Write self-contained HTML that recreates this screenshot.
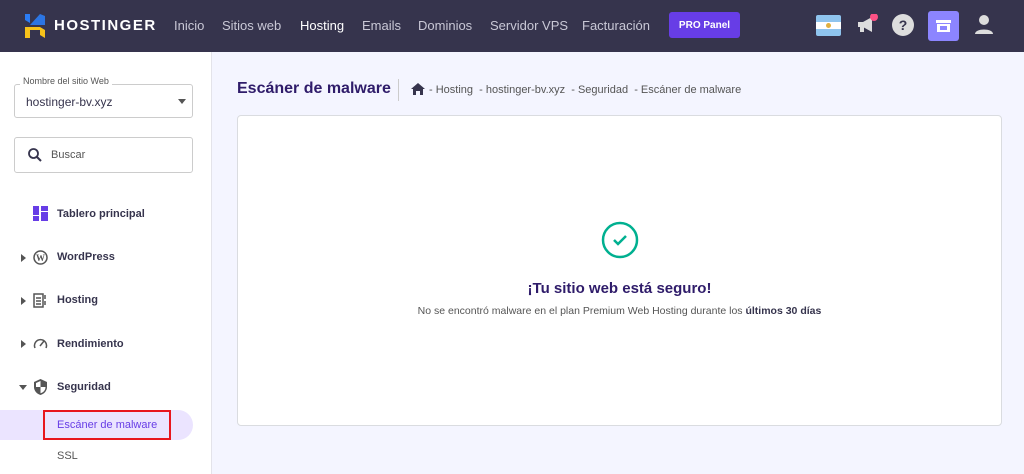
<!DOCTYPE html>
<html><head><meta charset="utf-8"><style>
*{margin:0;padding:0;box-sizing:border-box}
body{width:1024px;height:474px;overflow:hidden;background:#f4f5ff;font-family:"Liberation Sans",sans-serif;position:relative;color:#2f1c6a}
.top{position:absolute;left:0;top:0;width:1024px;height:52px;background:#36344d}
.nav{position:absolute;top:18px;font-size:13px;color:#c9c8d6}
.side{position:absolute;left:0;top:52px;width:212px;height:422px;background:#fff;border-right:1px solid #e3e3ea}
.item{position:absolute;left:57px;font-size:11px;font-weight:bold;color:#36344d}
.tri{position:absolute;left:21px;width:0;height:0;border-top:4px solid transparent;border-bottom:4px solid transparent;border-left:5px solid #555}
.ico{position:absolute;left:33px;width:15px;height:15px}
</style></head><body>
<div class="top">
  <svg style="position:absolute;left:25px;top:14px" width="20" height="24" viewBox="0 0 20 24"><path d="M0 0h5v9l-5-3z" fill="#2b7cf4"/><path d="M15 0l5 2v9H5z" fill="#2b7cf4" opacity=".9"/><path d="M0 13h15l5 3v8l-5-3v-5H5v8H0z" fill="#f7c21a"/></svg>
  <div style="position:absolute;left:54px;top:17px;color:#fff;font-weight:bold;font-size:15px;letter-spacing:1.5px">HOSTINGER</div>
  <div class="nav" style="left:174px">Inicio</div>
  <div class="nav" style="left:222px">Sitios web</div>
  <div class="nav" style="left:300px;color:#fff">Hosting</div>
  <div class="nav" style="left:362px">Emails</div>
  <div class="nav" style="left:418px">Dominios</div>
  <div class="nav" style="left:490px">Servidor VPS</div>
  <div class="nav" style="left:582px">Facturación</div>
  <div style="position:absolute;left:669px;top:12px;width:71px;height:26px;background:#673de6;border-radius:3px;color:#fff;font-size:10px;font-weight:bold;display:flex;align-items:center;justify-content:center">PRO Panel</div>
  <div style="position:absolute;left:816px;top:15px;width:25px;height:21px;border-radius:2px;background:linear-gradient(#8fc4ee 0 33%,#fff 33% 67%,#8fc4ee 67%)"><div style="position:absolute;left:10px;top:8px;width:5px;height:5px;border-radius:50%;background:#e0b040"></div></div>
  <svg style="position:absolute;left:856px;top:14px" width="22" height="22" viewBox="0 0 22 22"><path d="M2 8h5l9-5v15l-9-5H2zM4 13h4v5H4z" fill="#ddd"/><circle cx="18" cy="3" r="4" fill="#fc5185"/></svg>
  <svg style="position:absolute;left:892px;top:14px" width="22" height="22" viewBox="0 0 22 22"><circle cx="11" cy="11" r="11" fill="#ddd"/><text x="11" y="16" text-anchor="middle" font-size="14" font-weight="bold" fill="#36344d" font-family="Liberation Sans">?</text></svg>
  <div style="position:absolute;left:928px;top:11px;width:31px;height:30px;background:#8c85ff;border-radius:3px"><svg width="31" height="30" viewBox="0 0 31 30"><path d="M8 9h15v3H8zM9 13h13v8H9z" fill="#fff"/><path d="M12 15h7v4h-7z" fill="#8c85ff"/></svg></div>
  <svg style="position:absolute;left:974px;top:14px" width="20" height="22" viewBox="0 0 20 22"><circle cx="10" cy="6" r="5" fill="#ddd"/><path d="M1 20c0-6 18-6 18 0z" fill="#ddd"/></svg>
</div>
<div class="side">
  <div style="position:absolute;left:14px;top:32px;width:179px;height:34px;border:1px solid #ccc;border-radius:3px"></div>
  <div style="position:absolute;left:20px;top:24px;background:#fff;padding:0 3px;font-size:9px;color:#555">Nombre del sitio Web</div>
  <div style="position:absolute;left:26px;top:43px;font-size:12px;color:#36344d">hostinger-bv.xyz</div>
  <div style="position:absolute;left:178px;top:47px;border-left:4px solid transparent;border-right:4px solid transparent;border-top:5px solid #555"></div>
  <div style="position:absolute;left:14px;top:85px;width:179px;height:36px;border:1px solid #ccc;border-radius:3px"></div>
  <svg style="position:absolute;left:27px;top:95px" width="16" height="16" viewBox="0 0 16 16"><circle cx="6.5" cy="6.5" r="4.5" stroke="#36344d" stroke-width="1.8" fill="none"/><path d="M10 10l4 4" stroke="#36344d" stroke-width="2"/></svg>
  <div style="position:absolute;left:51px;top:97px;font-size:11px;color:#555">Buscar</div>
  <svg class="ico" style="top:154px" viewBox="0 0 15 15"><path d="M0 0h6v9H0zM8 0h7v5H8zM0 10h6v5H0zM8 6h7v9H8z" fill="#673de6"/></svg>
  <div class="item" style="top:156px">Tablero principal</div>
  <div class="tri" style="top:202px"></div>
  <svg class="ico" style="top:198px" viewBox="0 0 15 15"><circle cx="7.5" cy="7.5" r="6.5" stroke="#555" stroke-width="1.5" fill="none"/><text x="7.5" y="11" text-anchor="middle" font-size="9" font-weight="bold" fill="#555" font-family="Liberation Serif">W</text></svg>
  <div class="item" style="top:199px">WordPress</div>
  <div class="tri" style="top:245px"></div>
  <svg class="ico" style="top:241px" viewBox="0 0 15 15"><path d="M1 1h9v13H1z" stroke="#555" stroke-width="1.5" fill="none"/><path d="M3 5h5M3 8h5M3 11h5M12 2v4M12 8v4" stroke="#555" stroke-width="1.5"/></svg>
  <div class="item" style="top:242px">Hosting</div>
  <div class="tri" style="top:288px"></div>
  <svg class="ico" style="top:284px" viewBox="0 0 15 15"><path d="M2 12A6 6 0 1 1 13 12" stroke="#555" stroke-width="1.5" fill="none"/><path d="M7 10l4-5" stroke="#555" stroke-width="1.5"/></svg>
  <div class="item" style="top:286px">Rendimiento</div>
  <div style="position:absolute;left:19px;top:333px;border-left:4px solid transparent;border-right:4px solid transparent;border-top:5px solid #555"></div>
  <svg class="ico" style="top:327px;height:16px" viewBox="0 0 15 16"><path d="M7.5 0L14 3v5c0 4-3 7-6.5 8C4 15 1 12 1 8V3z" fill="#555"/><path d="M7.5 2v6H3V4zM7.5 8h5c0 3-2 5.5-5 6.3z" fill="#fff"/></svg>
  <div class="item" style="top:329px">Seguridad</div>
  <div style="position:absolute;left:0;top:358px;width:193px;height:30px;background:#ebe4ff;border-radius:0 15px 15px 0"></div>
  <div style="position:absolute;left:43px;top:358px;width:128px;height:30px;border:2px solid #e8161e"></div>
  <div style="position:absolute;left:57px;top:367px;font-size:11px;color:#673de6">Escáner de malware</div>
  <div style="position:absolute;left:57px;top:398px;font-size:11px;color:#555">SSL</div>
</div>
<div style="position:absolute;left:237px;top:80px;font-size:16px;font-weight:bold;color:#2f1c6a">Escáner de malware</div>
<div style="position:absolute;left:398px;top:79px;width:1px;height:22px;background:#ccc"></div>
<svg style="position:absolute;left:411px;top:83px" width="14" height="12" viewBox="0 0 14 12"><path d="M7 0l7 6h-2v6H9V8H5v4H2V6H0z" fill="#36344d"/></svg>
<div style="position:absolute;left:429px;top:84px;font-size:11px;color:#555">- Hosting &nbsp;- hostinger-bv.xyz &nbsp;- Seguridad &nbsp;- Escáner de malware</div>
<div style="position:absolute;left:237px;top:115px;width:765px;height:311px;background:#fff;border:1px solid #dadce0;border-radius:4px"></div>
<svg style="position:absolute;left:601px;top:221px" width="38" height="38" viewBox="0 0 38 38"><circle cx="19" cy="19" r="17" stroke="#00b090" stroke-width="2.5" fill="none"/><path d="M13 19l4 4 8-8" stroke="#00b090" stroke-width="2.5" fill="none"/></svg>
<div style="position:absolute;left:237px;width:765px;top:280px;text-align:center;font-size:15px;font-weight:bold;color:#2f1c6a">¡Tu sitio web está seguro!</div>
<div style="position:absolute;left:237px;width:765px;top:305px;text-align:center;font-size:10.5px;color:#555">No se encontró malware en el plan Premium Web Hosting durante los <b style="color:#36344d">últimos 30 días</b></div>
</body></html>
